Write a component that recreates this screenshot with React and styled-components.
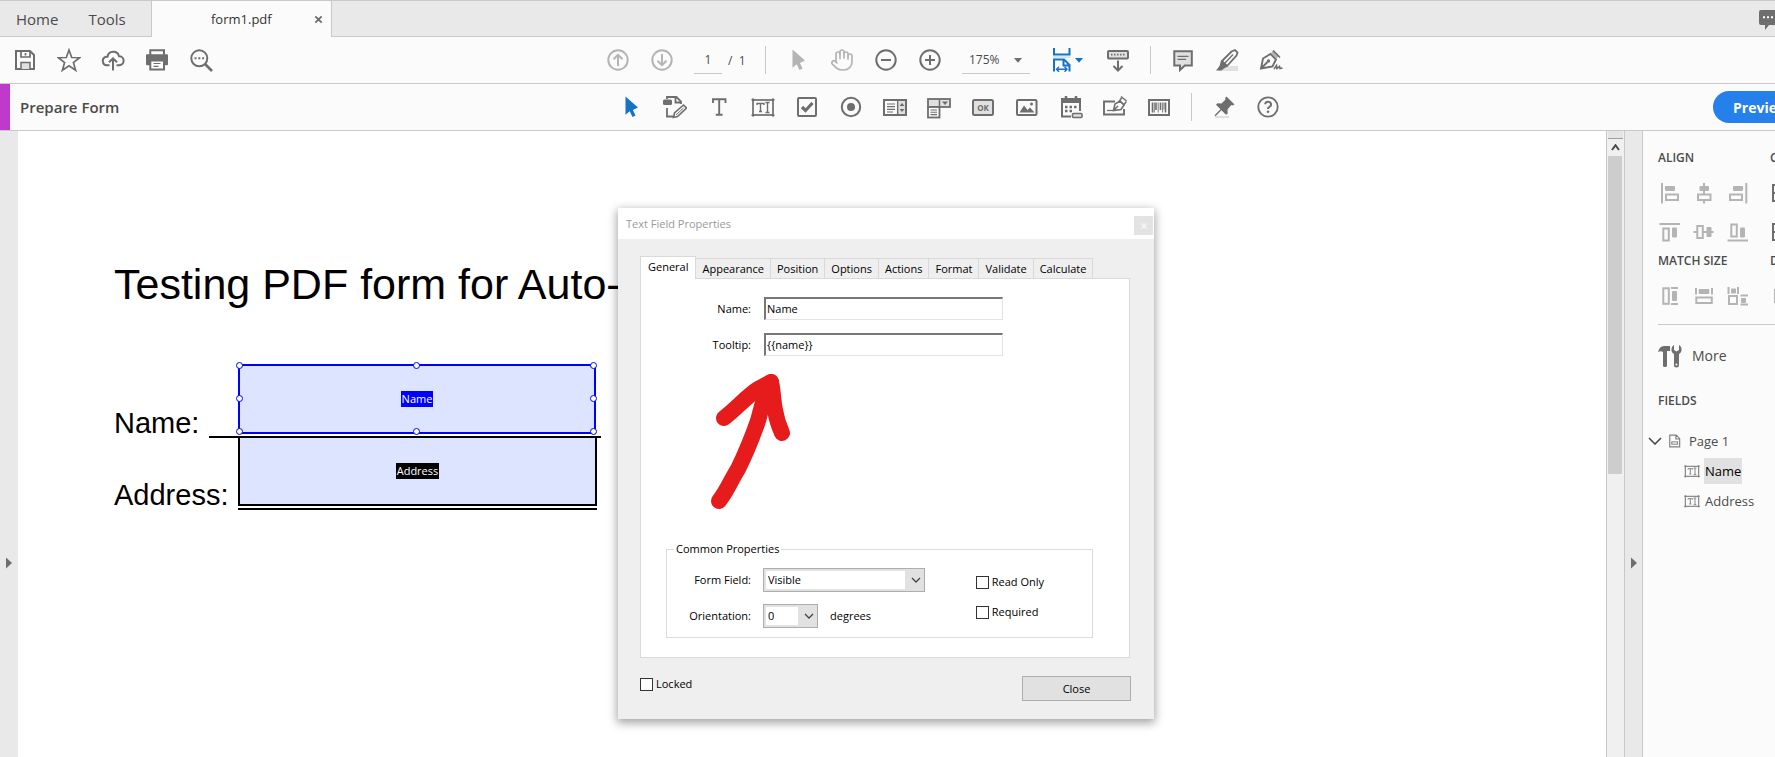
import React, { useState } from "react";
import styled, { createGlobalStyle } from "styled-components";
import { Hand } from "lucide-react";

const c = {
  ink: "#6e6e6e",
  soft: "#b4b4b4",
  tint: "#e0e0e0",
  line: "#c8c8c8",
  chrome: "#e9e9e9",
  bar: "#fbfbfb",
  text: "#4b4b4b",
  blue: "#1473c8",
};

const GlobalStyle = createGlobalStyle`
  *, *::before, *::after { box-sizing: border-box; }
  html, body, #root { height: 100%; margin: 0; }
  body { overflow: hidden; font-family: "Open Sans", "Noto Sans", sans-serif; color: ${c.text}; background: #fff; }
  button, input, select { font: inherit; color: inherit; margin: 0; }
  h1, h2, p, ul { margin: 0; padding: 0; font-weight: inherit; font-size: inherit; }
  li { list-style: none; }
`;

/* The application window is larger than the viewport and runs off its right and bottom edges. */
const Viewport = styled.div`
  height: 100vh;
  overflow: hidden;
`;
const Shell = styled.div`
  width: calc(100% + 114px);
  height: calc(100% + 238px);
  display: flex;
  flex-direction: column;
`;

const TabBar = styled.nav`
  flex: none;
  height: 37px;
  display: flex;
  border-top: 1px solid ${c.line};
  background: ${c.chrome};
`;
const MenuTabs = styled.div`
  display: flex;
  align-items: center;
  gap: 30px;
  width: 151px;
  padding-left: 16px;
  border-bottom: 1px solid ${c.line};
`;
const MenuTab = styled.button`
  border: 0;
  padding: 0;
  background: none;
  font-size: 15px;
  line-height: 20px;
`;
const FileTab = styled.div`
  width: 181px;
  display: flex;
  align-items: center;
  padding: 0 8px 0 59px;
  border: solid ${c.line};
  border-width: 0 1px;
  background: ${c.bar};
  color: #333;
  font-size: 13px;
  line-height: 20px;
`;
const TabClose = styled.button`
  margin-left: auto;
  display: flex;
  border: 0;
  padding: 0;
  background: none;
`;
const TabFill = styled.div`
  flex: 1;
  display: flex;
  justify-content: flex-end;
  align-items: center;
  padding-right: 108px;
  border-bottom: 1px solid ${c.line};
`;

const Toolbar = styled.div`
  flex: none;
  height: 47px;
  display: grid;
  grid-template-columns: 1fr auto 1fr;
  align-items: center;
  border-bottom: 1px solid ${c.line};
  background: ${c.bar};
`;
const Tools = styled.div`
  display: flex;
  align-items: center;
  gap: 20px;
  padding-left: ${(p) => p.$inset || 0}px;
`;
const ToolButton = styled.button`
  display: flex;
  align-items: center;
  gap: 1px;
  min-width: ${(p) => (p.$menu ? 36 : 24)}px;
  border: 0;
  padding: 0;
  background: none;
  color: ${(p) => (p.$tone === "active" ? c.blue : p.$tone === "off" ? c.soft : c.ink)};
`;
const Divider = styled.span`
  width: 1px;
  height: 28px;
  background: ${c.line};
`;
const PageBox = styled.label`
  display: flex;
  align-items: center;
  gap: 6px;
  width: 51px;
  height: 28px;
  font-size: 12px;
  white-space: nowrap;
`;
const PageInput = styled.input`
  width: 28px;
  height: 28px;
  border: 0;
  border-bottom: 1px solid ${c.line};
  padding: 0;
  background: none;
  text-align: center;
`;
const ZoomBox = styled.span`
  display: grid;
  align-items: center;
  width: 68px;
  > * { grid-area: 1 / 1; }
  > svg { justify-self: end; margin-right: 8px; pointer-events: none; color: ${c.ink}; }
`;
const ZoomSelect = styled.select`
  appearance: none;
  width: 100%;
  height: 28px;
  border: 0;
  border-bottom: 1px solid ${c.line};
  border-radius: 0;
  padding: 0 20px 0 7px;
  background: none;
  font-size: 12px;
`;
const ModeTitle = styled.h1`
  height: 46px;
  border-left: 10px solid #c038cc;
  padding-left: 10px;
  font-size: 15px;
  font-weight: 600;
  line-height: 47px;
`;
const PreviewButton = styled.button`
  justify-self: end;
  width: 100px;
  height: 32px;
  margin-right: 76px;
  border: 0;
  border-radius: 16px;
  padding: 0 20px;
  background: #2680eb;
  color: #fff;
  font-size: 14px;
  font-weight: 700;
  text-align: left;
`;

const Workspace = styled.div`
  position: relative;
  flex: 1;
  min-height: 0;
  display: flex;
`;
const Rail = styled.button`
  flex: none;
  width: ${(p) => (p.$framed ? 19 : 18)}px;
  display: flex;
  align-items: center;
  justify-content: center;
  border: solid ${c.line};
  border-width: ${(p) => (p.$framed ? "0 1px" : "0")};
  padding: 0;
  background: ${c.chrome};
  color: ${c.ink};
`;
const ScrollTrack = styled.div`
  flex: none;
  width: 18px;
  border-left: 1px solid ${c.line};
  padding: 0 1px;
  background: #f0f0f0;
`;
const SplitHandle = styled.div`
  height: 8px;
  border-bottom: 1px solid #a0a0a0;
  background: #e4e4e4;
`;
const ScrollUp = styled.button`
  display: flex;
  align-items: center;
  justify-content: center;
  width: 100%;
  height: 17px;
  border: 0;
  padding: 0;
  background: none;
`;
const ScrollThumb = styled.div`
  height: 318px;
  margin-right: 1px;
  background: #cdcdcd;
`;

const Document = styled.main`
  flex: 1;
  min-width: 0;
  padding: 129px 0 0 96px;
  background: #fff;
  color: #000;
  font-family: "Liberation Sans", Arial, sans-serif;
`;
const DocTitle = styled.h2`
  margin-bottom: 56px;
  font-size: 43px;
  line-height: 48px;
`;
const FormRow = styled.div`
  display: flex;
  align-items: flex-end;
`;
const RowLabel = styled.span`
  width: ${(p) => p.$width}px;
  font-size: 29px;
  line-height: 30px;
`;
const Rule = styled.div`
  width: ${(p) => p.$width}px;
  padding: 0 0 2px ${(p) => p.$inset || 0}px;
  border-bottom: 2px solid #000;
`;
const Field = styled.div`
  position: relative;
  width: ${(p) => (p.$selected ? 358 : 359)}px;
  height: ${(p) => (p.$selected ? 70 : 68)}px;
  display: flex;
  align-items: center;
  justify-content: center;
  border: 2px solid ${(p) => (p.$selected ? "#00f" : "#000")};
  ${(p) => !p.$selected && "border-top: 0;"}
  background: #dde4ff;
`;
const FieldTag = styled.span`
  padding: 0 1px;
  background: ${(p) => (p.$selected ? "#00f" : "#000")};
  color: #fff;
  font-family: "Open Sans", sans-serif;
  font-size: 11px;
  line-height: 16px;
`;
const Handle = styled.i`
  position: absolute;
  left: ${(p) => p.$x}%;
  top: ${(p) => p.$y}%;
  width: 7px;
  height: 7px;
  margin: -4px;
  border: 1px solid #00f;
  border-radius: 50%;
  background: #fff;
`;

const Dialog = styled.section`
  position: absolute;
  left: 618px;
  top: 77px;
  width: 536px;
  background: #efefef;
  box-shadow: 0 3px 9px 1px rgba(0, 0, 0, 0.36);
  color: #000;
  font-size: 11px;
  line-height: 16px;
`;
const TitleBar = styled.header`
  display: flex;
  align-items: center;
  justify-content: space-between;
  height: 31px;
  padding: 0 1px 0 8px;
  background: #fff;
  color: #999;
`;
const TitleClose = styled.button`
  width: 19px;
  height: 19px;
  margin-top: 4px;
  display: flex;
  align-items: center;
  justify-content: center;
  border: 0;
  padding: 0;
  background: #e3e3e3;
  color: #f6f6f6;
`;
const DialogBody = styled.div`
  padding: 17px 23px 18px 22px;
`;
const DialogTabs = styled.div`
  display: flex;
  align-items: flex-end;
  height: 22px;
`;
const DialogTab = styled.button`
  height: ${(p) => (p.$active ? 23 : 20)}px;
  margin-bottom: ${(p) => (p.$active ? -1 : 0)}px;
  border: 1px solid #d9d9d9;
  border-left-width: ${(p) => (p.$active ? 1 : 0)}px;
  border-bottom: 0;
  padding: ${(p) => (p.$active ? "0 7px 2px" : "0 6px")};
  background: ${(p) => (p.$active ? "#fff" : "#efefef")};
  z-index: 1;
`;
const TabPanel = styled.div`
  position: relative;
  margin-right: 1px;
  border: 1px solid #d9d9d9;
  padding: 18px 36px 19px 25px;
  background: #fff;
`;
const TextRow = styled.label`
  display: grid;
  grid-template-columns: 85px 239px;
  column-gap: 13px;
  align-items: center;
  margin-bottom: 13px;
  text-align: right;
`;
const TextInput = styled.input`
  height: 23px;
  border: solid #e3e3e3;
  border-width: 2px 1px 1px 2px;
  border-top-color: #777;
  border-left-color: #777;
  border-radius: 0;
  padding: 0 1px 2px;
  background: #fff;
`;
const Arrow = styled.svg`
  position: absolute;
  left: 66px;
  top: 89px;
  pointer-events: none;
`;
const Group = styled.fieldset`
  display: flex;
  justify-content: space-between;
  margin: 185px 0 0;
  border: 1px solid #dcdcdc;
  padding: 11px 48px 9px 8px;
  legend { padding: 0 2px; margin-left: -1px; }
`;
const Stack = styled.div`
  display: flex;
  flex-direction: column;
  gap: ${(p) => p.$gap}px;
  padding-top: ${(p) => p.$top || 0}px;
`;
const SelectRow = styled.div`
  display: grid;
  grid-template-columns: 76px auto 1fr;
  column-gap: 12px;
  align-items: center;
  > label { text-align: right; }
`;
const SelectBox = styled.span`
  display: grid;
  align-items: center;
  width: ${(p) => p.$width}px;
  > * { grid-area: 1 / 1; }
  > svg { justify-self: end; margin-right: 4px; pointer-events: none; color: #444; }
`;
const Select = styled.select`
  appearance: none;
  width: 100%;
  height: 24px;
  border: 1px solid #adadad;
  border-radius: 0;
  padding: 0 20px 0 4px;
  background: linear-gradient(#fff, #fff) no-repeat 2px 2px / calc(100% - 21px) 18px, #e1e1e1;
`;
const Check = styled.label`
  display: flex;
  align-items: center;
  gap: 3px;
`;
const CheckInput = styled.input`
  appearance: none;
  width: 13px;
  height: 13px;
  border: 1px solid #333;
  background: #fff;
  &:checked { background: #333; box-shadow: inset 0 0 0 2px #fff; }
`;
const DialogFooter = styled.footer`
  display: flex;
  align-items: flex-start;
  justify-content: space-between;
  padding-top: 18px;
`;
const CloseButton = styled.button`
  width: 109px;
  height: 25px;
  border: 1px solid #adadad;
  padding: 0;
  background: #e1e1e1;
`;

const Panel = styled.aside`
  flex: none;
  width: 246px;
  padding: 18px 15px 0;
  background: ${c.bar};
`;
const AlignGrid = styled.div`
  display: grid;
  grid-template-columns: 92px 104px;
  column-gap: 20px;
  padding-bottom: 16px;
  border-bottom: 1px solid ${c.line};
`;
const PanelHeading = styled.h2`
  font-size: 12px;
  font-weight: 600;
  line-height: 18px;
  white-space: nowrap;
`;
const IconRows = styled.div`
  display: grid;
  grid-template-columns: repeat(${(p) => p.$columns || 3}, 24px);
  gap: 15px 10px;
  padding: ${(p) => (p.$last ? "14px 0 0" : "14px 0 8px")};
`;
const MoreButton = styled.button`
  display: flex;
  align-items: center;
  gap: 10px;
  margin: 19px 0 24px;
  border: 0;
  padding: 0;
  background: none;
  font-size: 14px;
  line-height: 24px;
`;
const Tree = styled.ul`
  padding-top: 16px;
  margin-left: -10px;
  font-size: 13px;
`;
const TreeRow = styled.li`
  display: flex;
  align-items: center;
  gap: ${(p) => (p.$nested ? 4 : 6)}px;
  height: 30px;
  padding-left: ${(p) => (p.$nested ? 36 : 0)}px;
`;
const TreeName = styled.button`
  height: 26px;
  border: 0;
  padding: 0 1px;
  background: ${(p) => (p.$current ? "#e1e1e1" : "none")};
  color: ${(p) => (p.$current ? "#000" : c.text)};
`;

function Icon({ children, size = 24, ...rest }) {
  return (
    <svg width={size} height={size} viewBox="0 0 24 24" fill="none" stroke="currentColor" strokeWidth="2" aria-hidden="true" {...rest}>
      {children}
    </svg>
  );
}
const solid = { fill: "currentColor", stroke: "none" };

const Caret = () => (
  <svg width="8" height="5" viewBox="0 0 8 5" aria-hidden="true"><path d="M0 0h8L4 4.800z" fill="currentColor" /></svg>
);
const Chevron = ({ w = 10, h = 6, flip, sw = 1.3 }) => (
  <svg width={w} height={h} viewBox={`0 0 ${w} ${h}`} fill="none" stroke="currentColor" strokeWidth={sw} aria-hidden="true">
    <path d={flip ? `M1 ${h - 1}L${w / 2} 1.2L${w - 1} ${h - 1}` : `M1 1L${w / 2} ${h - 1}L${w - 1} 1`} />
  </svg>
);
const Triangle = () => (
  <svg width="6" height="12" viewBox="0 0 6 12" aria-hidden="true"><path d="M0 0.5v11L6 6z" fill="currentColor" /></svg>
);

const art = {
  save: (
    <>
      <path d="M3 3h14l4 4v14H3z" />
      <path d="M8 3v6h9V3M12.500 5v2.500" strokeWidth="1.700" />
      <path d="M8 21v-6.500h9V21" fill={c.tint} strokeWidth="1.500" />
    </>
  ),
  star: <path strokeWidth="1.700" d="M12 2l2.700 7.500 8 .2-6.300 4.900 2.200 7.700L12 17.800l-6.600 4.500 2.200-7.700L1.300 9.700l8-.2z" />,
  cloud: <path d="M8.500 17.200H6a4.300 4.300 0 0 1-.8-8.500h1.300A5.900 5.900 0 0 1 18 8.200a4.500 4.500 0 0 1 .3 9h-2.800M12 22.500V10.500M8 14.300l4-4 4 4" />,
  print: (
    <>
      <path d="M5.300 7V2.300H19V7" />
      <rect {...solid} x="1" y="6.300" width="22" height="11" rx="1" />
      <rect x="5.300" y="12.500" width="13.700" height="9" fill="#fff" />
      <path d="M8.500 15.500h7M8.500 18.300h5" strokeWidth="1.200" />
    </>
  ),
  find: (
    <>
      <circle cx="10.300" cy="10.300" r="8" />
      <path d="M16 16l7 7" strokeWidth="2.600" />
      <path d="M5.500 10.300h2M9.300 10.300h2M13.100 10.300h2" />
    </>
  ),
  up: <><circle cx="12" cy="12" r="9.700" /><path d="M12 18V7M7.500 11.300L12 6.800l4.500 4.500" /></>,
  down: <><circle cx="12" cy="12" r="9.700" /><path d="M12 6v11M7.500 12.700l4.500 4.500 4.500-4.500" /></>,
  pointer: <path {...solid} d="M6.500 1.500v18.300l4.200-3.500 2.800 5.600 3-1.400-2.600-5.400 5.100-2.600z" />,
  minus: <><circle cx="12" cy="12" r="9.700" /><path d="M7 12h10" /></>,
  plus: <><circle cx="12" cy="12" r="9.700" /><path d="M7 12h10M12 7v10" /></>,
  fit: (
    <>
      <path d="M4 0v6.500h15.500V0M4 23.500V11.500h10l5.500 5.500v6.500M13.500 11.500v6h6" />
      <path d="M3 9h17.500" stroke="#d6e8f7" />
      <path d="M7 21.300h9.500M9 18.800l-2.500 2.500L9 23.800M14.500 18.800l2.500 2.500-2.500 2.500" strokeWidth="1.400" />
    </>
  ),
  keyboard: (
    <>
      <rect x="2" y="3" width="20" height="7.500" rx="1" fill={c.tint} />
      <path d="M5 6.700h1.500M8 6.700h1.500M11 6.700h1.500M14 6.700h1.500M17 6.700h1.500" strokeWidth="1.800" />
      <path d="M12 12.500v10M7.500 18l4.500 4.500 4.500-4.500" />
    </>
  ),
  comment: (
    <>
      <path d="M3.300 3.300h17.500v14.300h-7L9 22v-4.400H3.300z" fill={c.tint} />
      <path d="M6.500 8.300h11M6.500 11.300h8.500" strokeWidth="1.300" />
    </>
  ),
  marker: (
    <>
      <path {...solid} fill={c.tint} d="M8 18h15v5H3z" />
      <path d="M7 13L16.500 3.500l3.500-1.500 2.500 2.500-1 3L12 18z" fill={c.bar} strokeWidth="1.800" />
      <path {...solid} d="M6 12.500l6.500 6L9 20.500 6.500 22.500H1L4.500 18z" />
      <path d="M10 15l8-8.500" strokeWidth="1.300" />
    </>
  ),
  sign: (
    <>
      <path d="M2 20.500l2-10 7.500-4.500 5.500 5.500-3.500 7L2 20.500zM2 20.500l6.500-6.500" strokeWidth="1.900" />
      <circle cx="9.500" cy="13" r="1.700" {...solid} />
      <path d="M14 2.500l7 7" strokeWidth="1.600" />
      <path {...solid} d="M12 5l2.500-3 6 6-3 2.500z" opacity=".5" />
      <path d="M15 21l2.500-3.500.5 3 2.500-2 .5 2 2.500-.5" strokeWidth="1.600" />
    </>
  ),
  edit: (
    <>
      <rect {...solid} x="0" y="4.500" width="9" height="5.500" rx="1.500" />
      <path d="M4 4V2h9.500l4.500 4.500V9M4 13v8.500h7M12.500 2v5.500H18" strokeWidth="1.800" />
      <path d="M10.500 22.500l1-4.500L20.500 10l3 3-9 8.500z" fill={c.bar} strokeWidth="1.600" />
      <path d="M13 20l7.500-7" strokeWidth="1" />
    </>
  ),
  text: <path d="M6 8V4.300h12.500V8M12.200 4.300v15.500M8.800 19.800h6.800" strokeWidth="1.900" />,
  textField: (
    <>
      <rect x="2" y="5" width="20" height="15" strokeWidth="1.700" />
      <path d="M.5 4.800h3M20.500 4.800h3M.5 20.200h3M20.500 20.200h3M2 3.300v3M22 3.300v3M2 18.700v3M22 18.700v3" strokeWidth="1.500" />
      <path d="M6 10V8.500h7V10M9.500 8.500v8M8 16.500h3M14.500 7.500h4M16.500 7.500v10M14.500 17.500h4" strokeWidth="1.400" />
    </>
  ),
  check: <><rect x="3" y="3" width="18" height="18" rx="1" /><path d="M7 12l3.500 3.500L17.500 8" strokeWidth="3.200" /></>,
  radio: <><circle cx="12" cy="12" r="9.200" /><circle cx="12" cy="12" r="4" {...solid} /></>,
  list: (
    <>
      <rect x="1" y="5" width="22" height="15" />
      <path {...solid} fill={c.tint} d="M15.500 6H22v13h-6.500z" />
      <path d="M14.700 5v15" strokeWidth="1.500" />
      <path d="M4 9h8M4 11.700h8M4 14.300h8M4 17h6" strokeWidth="1.200" />
      <path {...solid} d="M16.500 11h5l-2.500-3zM16.500 14h5L19 17z" />
    </>
  ),
  dropdown: (
    <>
      <rect x="1" y="4" width="22" height="8" fill={c.tint} strokeWidth="1.800" />
      <path d="M12.500 4v8" strokeWidth="1.500" />
      <path {...solid} d="M15 6.500h6l-3 3.500z" />
      <rect x="1" y="12" width="11.500" height="10.500" strokeWidth="1.800" fill={c.bar} />
      <path d="M3.500 15h6.500M3.500 17.300h6.500M3.500 19.600h6.500" strokeWidth="1.100" />
    </>
  ),
  ok: (
    <>
      <rect x="2" y="5" width="20" height="15" rx="1.500" fill={c.tint} />
      <text x="12" y="15.500" textAnchor="middle" fontSize="8" fontWeight="700" fontFamily="Open Sans, sans-serif" {...solid}>OK</text>
    </>
  ),
  image: (
    <>
      <rect x="2" y="5" width="19.500" height="15" rx="1" />
      <path {...solid} d="M4.500 17.500l4.500-7 3.500 4.500 2.500-2.500 4.500 5z" />
      <circle cx="16.500" cy="9" r="1.500" {...solid} />
    </>
  ),
  date: (
    <>
      <path d="M12 21.500H3V4h18v12" />
      <path {...solid} d="M3 3h18v5H3z" />
      <path d="M7 1v3.500M17 1v3.500" strokeWidth="2.500" />
      <path d="M6 12h2.500M10.500 12H13M15 12h2.500M6 16h2.500M10.500 16H13" strokeWidth="2.500" />
      <rect x="13.500" y="18.500" width="9.500" height="4" rx="1" fill={c.tint} strokeWidth="1.600" />
    </>
  ),
  signature: (
    <>
      <path d="M12 6.500H1v13h20V14" strokeWidth="1.900" />
      <path d="M4 15.500h6" strokeWidth="1.200" />
      <path d="M10.500 15.500l1.500-6.500 5-3 4 4-3 4.500-7.500 1zM11 15l4-4" strokeWidth="1.600" fill={c.bar} />
      <path d="M18 1.500l5.500 4.500M18.500 3l-2 3 4.500 3.500 2.500-3" strokeWidth="1.500" />
    </>
  ),
  barcode: (
    <>
      <rect x="2" y="5" width="20" height="15" />
      <path d="M5.500 7.500v10M9 7.500v7.500M18.500 7.500v10M13.500 7.500v7.500" strokeWidth="1.600" />
      <path d="M7.300 7.500v10M11.200 7.500v10M15.600 7.500v10M17 7.500v7" strokeWidth=".9" />
    </>
  ),
  pin: (
    <>
      <path {...solid} fill={c.tint} d="M3 21h14v2H3z" />
      <path {...solid} d="M14.500 1.500l8 8-2 1-1.200-.4-3.800 4.400.2 4-1.700 1.300-4.600-4.600-5.900 6-1-1 6-6L4 9.700l1.500-1.500 4 .2 4-3.900-.4-1.500z" />
    </>
  ),
  help: (
    <>
      <circle cx="12" cy="12" r="9.700" strokeWidth="1.800" />
      <path d="M9.200 9.300a2.900 2.700 0 1 1 4.200 2.500c-1 .6-1.400 1-1.400 2.200" />
      <circle cx="12" cy="16.800" r="1.300" {...solid} />
    </>
  ),
  chat: (
    <>
      <path {...solid} d="M4 3h16a2 2 0 0 1 2 2v11a2 2 0 0 1-2 2h-8l-4 5v-5H4a2 2 0 0 1-2-2V5a2 2 0 0 1 2-2z" />
      <path d="M6 10.300h2M10 10.300h2M14 10.300h2" stroke="#fff" />
    </>
  ),
  alignLeft: <><path d="M4 2v20.500" /><rect {...solid} x="7" y="5" width="10" height="5" rx="1" /><rect x="8" y="13.500" width="12" height="5.500" /></>,
  alignCenter: <><path d="M12 2v11M12 19v3.500" /><rect {...solid} x="7.500" y="5" width="9.500" height="5" rx="1" /><rect x="6" y="13.500" width="12.500" height="5.500" /></>,
  alignRight: <><path d="M20.300 2v20.500" /><rect {...solid} x="7" y="5" width="10" height="5" rx="1" /><rect x="4" y="13.500" width="12" height="5.500" /></>,
  alignTop: <><path d="M1.500 4H22" /><rect x="5.300" y="8.500" width="5.500" height="12" /><rect {...solid} x="14" y="7.500" width="5" height="10" rx="1" /></>,
  alignMiddle: <><path d="M1.500 12H5M11 12h10.500" /><rect x="5.300" y="6" width="5.500" height="12" /><rect {...solid} x="14.500" y="7" width="5" height="10" rx="1" /></>,
  alignBottom: <><path d="M1.500 20.500H22" /><rect x="5.300" y="4.500" width="5.500" height="12" /><rect {...solid} x="14" y="7.500" width="5" height="10" rx="1" /></>,
  matchHeight: <><rect x="5.300" y="4.300" width="5.500" height="15.500" /><rect {...solid} x="14" y="7" width="5" height="10" rx="1" /><path d="M13 4h7M13 20h7" /></>,
  matchWidth: <><rect {...solid} x="6.700" y="5" width="10.600" height="5" rx="1" /><rect x="4.300" y="13.500" width="15.500" height="5.500" /><path d="M4 4v6.500M20 4v6.500" /></>,
  matchBoth: (
    <>
      <rect x="3" y="12" width="8" height="8" />
      <rect {...solid} x="5" y="4.500" width="5" height="5" rx="1" />
      <path d="M2.500 3v7M12 3v7M14.500 11.500H22M14.500 20.500H22" />
      <rect {...solid} x="15" y="14" width="5" height="5" rx="1" />
    </>
  ),
  centerBox: <><rect x="3" y="4" width="18" height="16" /><path d="M3 12h18" /></>,
  spread: <path d="M5 5v14M19 5v14" />,
  tools: (
    <>
      <path {...solid} d="M0 8c1-4 3-6 6-6h6v5H9v14.500a1.500 1.500 0 0 1-1.500 1.500h-1A1.500 1.500 0 0 1 5 21.500V8c-1.500-1-3-1-5 0z" />
      <path {...solid} d="M16 1v5l2.500 1.500L21 6V1c2 1 2.800 3 2.500 5.500-.3 2-1.500 3-2.500 3.500v11a2.500 2.500 0 0 1-5 0V10c-1.500-.7-2.300-2-2.500-3.500C13.300 4 14 2 16 1z" />
      <circle cx="18.500" cy="20.500" r="1" fill={c.bar} stroke="none" />
    </>
  ),
  page: <><path d="M3 2h11l6 6v14H3zM13.500 2v6.500H20" /><rect x="6.500" y="13.500" width="10" height="4" strokeWidth="1.700" /></>,
};

function Tool({ name, label, tone, menu }) {
  return (
    <ToolButton type="button" aria-label={label} $tone={tone} $menu={menu}>
      <Icon>{art[name]}</Icon>
      {menu && <Caret />}
    </ToolButton>
  );
}

const fileTools = [["save", "Save"], ["star", "Favorites"], ["cloud", "Upload"], ["print", "Print"], ["find", "Find"]];
const formTools = [
  ["pointer", "Select", "active"], ["edit", "Edit"], ["text", "Add text"], ["textField", "Text field"], ["check", "Check box"],
  ["radio", "Radio button"], ["list", "List box"], ["dropdown", "Dropdown"], ["ok", "Button"], ["image", "Image"],
  ["date", "Date"], ["signature", "Signature"], ["barcode", "Barcode"],
];
const handles = [[0, 0], [50, 0], [100, 0], [0, 50], [100, 50], [0, 100], [50, 100], [100, 100]];
const dialogTabs = ["General", "Appearance", "Position", "Options", "Actions", "Format", "Validate", "Calculate"];

function PropertiesDialog() {
  const [name, setName] = useState("Name");
  const [tip, setTip] = useState("{{name}}");
  return (
    <Dialog role="dialog" aria-label="Text Field Properties">
      <TitleBar>
        <span>Text Field Properties</span>
        <TitleClose type="button" aria-label="Close window">
          <svg width="6" height="6" viewBox="0 0 6 6" stroke="currentColor" strokeWidth="1.500"><path d="M.5.5l5 5M5.500.5l-5 5" /></svg>
        </TitleClose>
      </TitleBar>
      <DialogBody>
        <DialogTabs role="tablist">
          {dialogTabs.map((t, i) => (
            <DialogTab key={t} type="button" role="tab" aria-selected={i === 0} $active={i === 0}>{t}</DialogTab>
          ))}
        </DialogTabs>
        <TabPanel role="tabpanel">
          <TextRow>Name:<TextInput value={name} onChange={(e) => setName(e.target.value)} /></TextRow>
          <TextRow>Tooltip:<TextInput value={tip} onChange={(e) => setTip(e.target.value)} /></TextRow>
          <Arrow width="90" height="145" viewBox="0 0 90 145" fill="none" stroke="#e61c1c" strokeWidth="16" strokeLinecap="round" strokeLinejoin="round">
            <path d="M12 133C20 123 24 112 31 101C39 85 45 70 51 53C54 42 56 30 64 14" />
            <path d="M17 50C30 40 40 28 51 21L64 14C66 22 66 32 68 42Q70 54 75 65" />
          </Arrow>
          <Group>
            <legend>Common Properties</legend>
            <Stack $gap={12}>
              <SelectRow>
                <label htmlFor="visibility">Form Field:</label>
                <SelectBox $width={162}>
                  <Select id="visibility" defaultValue="Visible"><option>Visible</option><option>Hidden</option></Select>
                  <Chevron />
                </SelectBox>
              </SelectRow>
              <SelectRow>
                <label htmlFor="orientation">Orientation:</label>
                <SelectBox $width={55}>
                  <Select id="orientation" defaultValue="0"><option>0</option><option>90</option></Select>
                  <Chevron />
                </SelectBox>
                <span>degrees</span>
              </SelectRow>
            </Stack>
            <Stack $gap={14} $top={6}>
              <Check><CheckInput type="checkbox" />Read Only</Check>
              <Check><CheckInput type="checkbox" />Required</Check>
            </Stack>
          </Group>
        </TabPanel>
        <DialogFooter>
          <Check><CheckInput type="checkbox" />Locked</Check>
          <CloseButton type="button">Close</CloseButton>
        </DialogFooter>
      </DialogBody>
    </Dialog>
  );
}

function AlignTools({ names, off, ...rest }) {
  return (
    <IconRows {...rest}>
      {names.map((n, i) => <Tool key={n + i} name={n} label={n} tone={off ? "off" : undefined} />)}
    </IconRows>
  );
}

function SidePanel() {
  return (
    <Panel>
      <AlignGrid>
        <div>
          <PanelHeading>ALIGN</PanelHeading>
          <AlignTools off names={["alignLeft", "alignCenter", "alignRight", "alignTop", "alignMiddle", "alignBottom"]} />
          <PanelHeading>MATCH SIZE</PanelHeading>
          <AlignTools off $last names={["matchHeight", "matchWidth", "matchBoth"]} />
        </div>
        <div>
          <PanelHeading>CENTER</PanelHeading>
          <AlignTools $columns={1} names={["centerBox", "centerBox"]} />
          <PanelHeading>DISTRIBUTE</PanelHeading>
          <AlignTools off $last $columns={1} names={["spread"]} />
        </div>
      </AlignGrid>
      <MoreButton type="button">
        <Icon color={c.ink}>{art.tools}</Icon>
        More
      </MoreButton>
      <PanelHeading>FIELDS</PanelHeading>
      <Tree>
        <TreeRow>
          <Chevron w={14} h={8} sw={1.6} />
          <Icon size={14} color="#808080">{art.page}</Icon>
          <TreeName type="button">Page 1</TreeName>
        </TreeRow>
        {["Name", "Address"].map((f) => (
          <TreeRow key={f} $nested>
            <Icon size={16} color="#808080">{art.textField}</Icon>
            <TreeName type="button" $current={f === "Name"}>{f}</TreeName>
          </TreeRow>
        ))}
      </Tree>
    </Panel>
  );
}

export default function App() {
  const [page, setPage] = useState("1");
  return (
    <Viewport>
      <GlobalStyle />
      <Shell>
        <TabBar>
          <MenuTabs>
            <MenuTab type="button">Home</MenuTab>
            <MenuTab type="button">Tools</MenuTab>
          </MenuTabs>
          <FileTab>
            form1.pdf
            <TabClose type="button" aria-label="Close tab">
              <svg width="9" height="9" viewBox="0 0 10 10" stroke={c.ink} strokeWidth="2"><path d="M1.500 1.500l7 7M8.500 1.500l-7 7" /></svg>
            </TabClose>
          </FileTab>
          <TabFill><Tool name="chat" label="Feedback" /></TabFill>
        </TabBar>

        <Toolbar>
          <Tools $inset={13}>{fileTools.map(([n, l]) => <Tool key={n} name={n} label={l} />)}</Tools>
          <Tools>
            <Tool name="up" label="Previous page" tone="off" />
            <Tool name="down" label="Next page" tone="off" />
            <PageBox><PageInput aria-label="Page" value={page} onChange={(e) => setPage(e.target.value)} />/&nbsp; 1</PageBox>
            <Divider />
            <Tool name="pointer" label="Select" tone="off" />
            <ToolButton type="button" aria-label="Pan" $tone="off"><Hand size={24} strokeWidth={1.7} /></ToolButton>
            <Tool name="minus" label="Zoom out" />
            <Tool name="plus" label="Zoom in" />
            <ZoomBox>
              <ZoomSelect aria-label="Zoom" defaultValue="175%"><option>175%</option><option>100%</option></ZoomSelect>
              <Caret />
            </ZoomBox>
            <Tool name="fit" label="Fit width" tone="active" menu />
            <Tool name="keyboard" label="Keyboard" />
            <Divider />
            <Tool name="comment" label="Comment" />
            <Tool name="marker" label="Highlight" />
            <Tool name="sign" label="Sign" />
          </Tools>
        </Toolbar>

        <Toolbar>
          <ModeTitle>Prepare Form</ModeTitle>
          <Tools $inset={10}>
            {formTools.map(([n, l, t]) => <Tool key={n} name={n} label={l} tone={t} />)}
            <Divider />
            <Tool name="pin" label="Keep tool selected" />
            <Tool name="help" label="Help" />
          </Tools>
          <PreviewButton type="button">Preview</PreviewButton>
        </Toolbar>

        <Workspace>
          <Rail type="button" aria-label="Show navigation"><Triangle /></Rail>
          <Document>
            <DocTitle>Testing PDF form for Auto-</DocTitle>
            <FormRow>
              <RowLabel $width={95}>Name:</RowLabel>
              <Rule $width={392} $inset={29}>
                <Field $selected>
                  <FieldTag $selected>Name</FieldTag>
                  {handles.map(([x, y]) => <Handle key={`${x}-${y}`} $x={x} $y={y} />)}
                </Field>
              </Rule>
            </FormRow>
            <FormRow>
              <RowLabel $width={124}>Address:</RowLabel>
              <Rule $width={359}><Field><FieldTag>Address</FieldTag></Field></Rule>
            </FormRow>
          </Document>
          <ScrollTrack>
            <SplitHandle />
            <ScrollUp type="button" aria-label="Scroll up"><Chevron w={9} h={7} flip sw={2} /></ScrollUp>
            <ScrollThumb />
          </ScrollTrack>
          <Rail type="button" aria-label="Hide panel" $framed><Triangle /></Rail>
          <SidePanel />
          <PropertiesDialog />
        </Workspace>
      </Shell>
    </Viewport>
  );
}
